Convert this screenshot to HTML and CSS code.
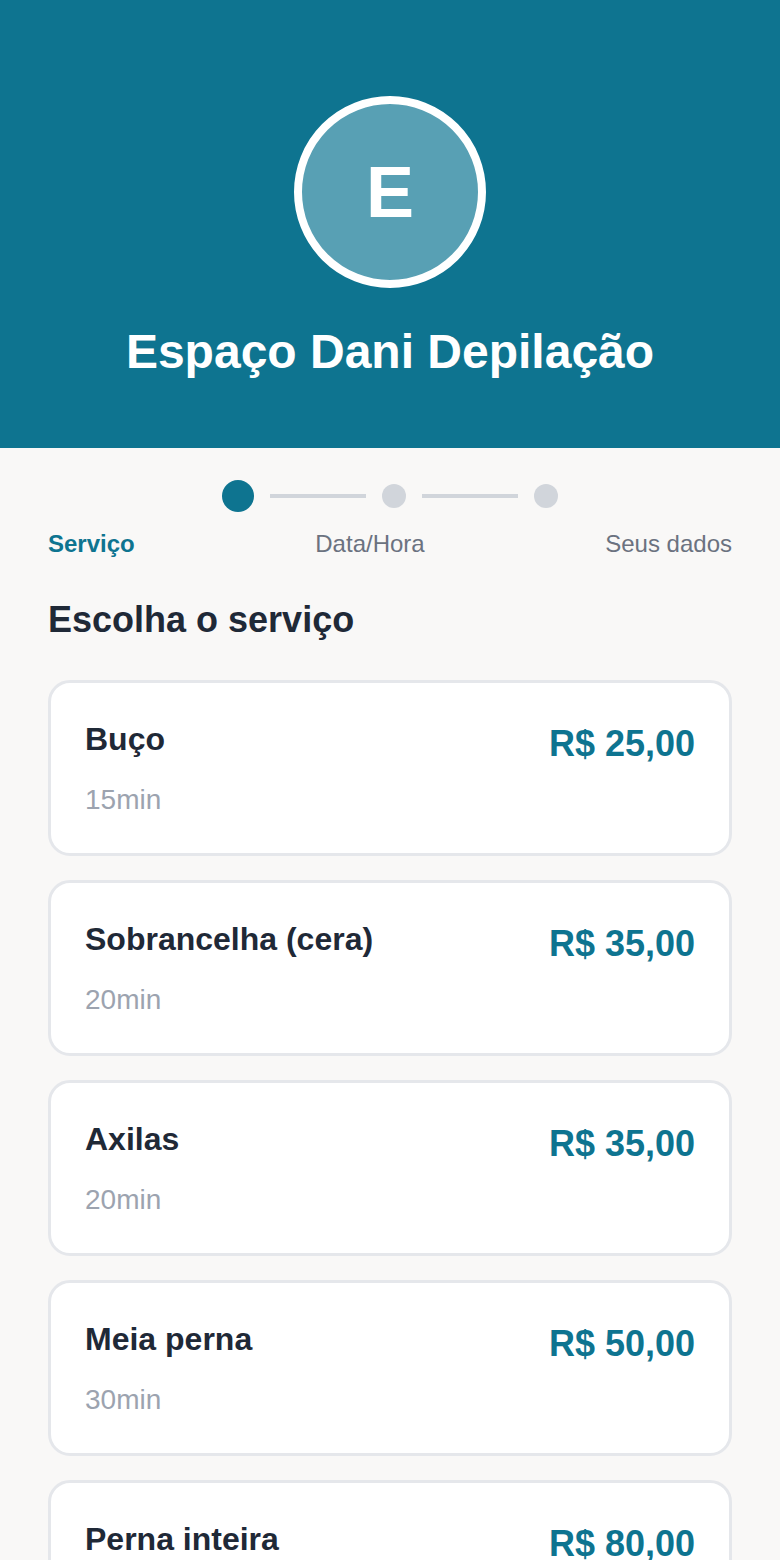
FILE: index.html
```html
<!DOCTYPE html>
<html lang="pt-BR">
<head>
<meta charset="utf-8">
<title>Espaço Dani Depilação</title>
<link rel="stylesheet" href="styles.css">
</head>
<body>
<header class="hero">
  <div class="avatar"><span>E</span></div>
  <h1 class="title">Espaço Dani Depilação</h1>
</header>
<main class="content">
  <div class="stepper">
    <span class="dot dot-active"></span>
    <span class="line"></span>
    <span class="dot"></span>
    <span class="line"></span>
    <span class="dot"></span>
  </div>
  <div class="step-labels">
    <span class="step-label step-label-active">Serviço</span>
    <span class="step-label">Data/Hora</span>
    <span class="step-label">Seus dados</span>
  </div>
  <h2 class="section-title">Escolha o serviço</h2>
  <ul class="services">
    <li class="card">
      <div class="card-info"><div class="name">Buço</div><div class="duration">15min</div></div>
      <div class="price">R$ 25,00</div>
    </li>
    <li class="card">
      <div class="card-info"><div class="name">Sobrancelha (cera)</div><div class="duration">20min</div></div>
      <div class="price">R$ 35,00</div>
    </li>
    <li class="card">
      <div class="card-info"><div class="name">Axilas</div><div class="duration">20min</div></div>
      <div class="price">R$ 35,00</div>
    </li>
    <li class="card">
      <div class="card-info"><div class="name">Meia perna</div><div class="duration">30min</div></div>
      <div class="price">R$ 50,00</div>
    </li>
    <li class="card">
      <div class="card-info"><div class="name">Perna inteira</div><div class="duration">45min</div></div>
      <div class="price">R$ 80,00</div>
    </li>
  </ul>
</main>
</body>
</html>
```
FILE: styles.css
```css
* { box-sizing: border-box; }
html, body { margin: 0; padding: 0; }
body {
  font-family: "Liberation Sans", Arial, sans-serif;
  background: #f9f8f7;
  color: #1f2937;
}
.hero {
  background: #0e7490;
  padding: 96px 48px 0;
  height: 448px;
  display: flex;
  flex-direction: column;
  align-items: center;
}
.avatar {
  width: 192px;
  height: 192px;
  border-radius: 50%;
  border: 8px solid #ffffff;
  background: #58a0b4;
  display: flex;
  align-items: center;
  justify-content: center;
}
.avatar span {
  color: #ffffff;
  font-weight: 700;
  font-size: 72px;
  line-height: 1;
}
.title {
  margin: 28px 0 0;
  color: #ffffff;
  font-size: 48px;
  font-weight: 700;
  line-height: 72px;
}
.content {
  padding: 32px 48px 0;
}
.stepper {
  display: flex;
  align-items: center;
  justify-content: center;
  gap: 16px;
  height: 32px;
}
.dot {
  width: 24px;
  height: 24px;
  border-radius: 50%;
  background: #d1d5db;
}
.dot-active {
  width: 32px;
  height: 32px;
  background: #0e7490;
}
.line {
  width: 96px;
  height: 4px;
  background: #d1d5db;
}
.step-labels {
  display: flex;
  justify-content: space-between;
  margin-top: 14px;
}
.step-label {
  font-size: 24px;
  line-height: 36px;
  color: #6b7280;
}
.step-label-active {
  color: #0e7490;
  font-weight: 700;
}
.section-title {
  margin: 31px 0 0;
  font-size: 36px;
  line-height: 54px;
  font-weight: 700;
  color: #1f2937;
}
.services {
  list-style: none;
  margin: 33px 0 0;
  padding: 0;
  display: flex;
  flex-direction: column;
  gap: 24px;
}
.card {
  background: #ffffff;
  border: 3px solid #e5e7eb;
  border-radius: 22px;
  padding: 32px 34px 32px;
  display: flex;
  justify-content: space-between;
  align-items: flex-start;
}
.name {
  font-size: 32px;
  font-weight: 700;
  line-height: 48px;
  color: #1f2937;
}
.duration {
  margin-top: 16px;
  font-size: 28px;
  line-height: 42px;
  color: #9ca3af;
}
.price {
  margin-top: 2px;
  font-size: 36px;
  font-weight: 700;
  line-height: 54px;
  color: #0e7490;
}
```
